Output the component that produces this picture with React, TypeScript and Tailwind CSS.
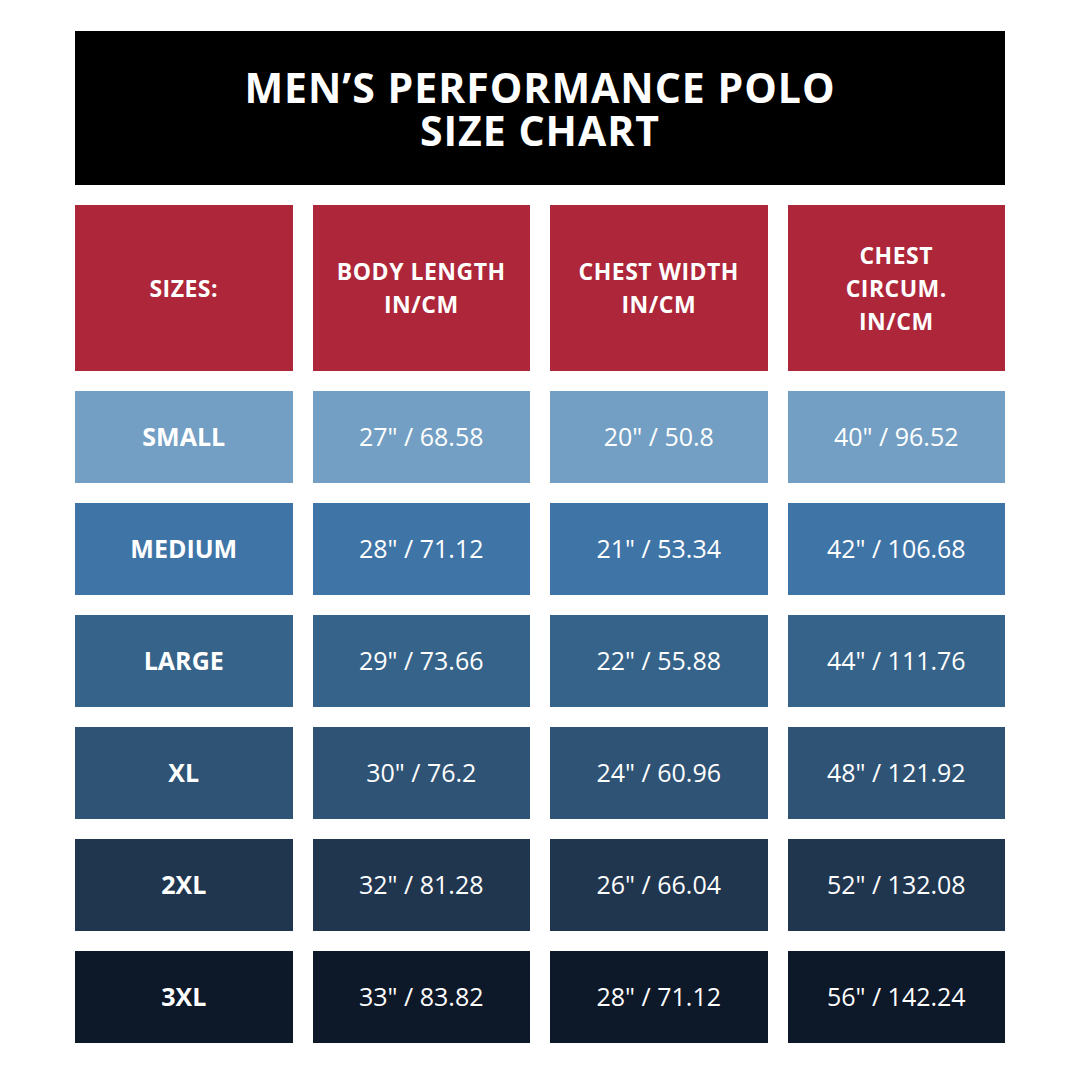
const headers = [
  ["SIZES:"],
  ["BODY LENGTH", "IN/CM"],
  ["CHEST WIDTH", "IN/CM"],
  ["CHEST", "CIRCUM.", "IN/CM"],
]

const rows = [
  { size: "SMALL", body: "27\" / 68.58", width: "20\" / 50.8", circ: "40\" / 96.52", bg: "bg-[#739fc4]" },
  { size: "MEDIUM", body: "28\" / 71.12", width: "21\" / 53.34", circ: "42\" / 106.68", bg: "bg-[#3f74a7]" },
  { size: "LARGE", body: "29\" / 73.66", width: "22\" / 55.88", circ: "44\" / 111.76", bg: "bg-[#356389]" },
  { size: "XL", body: "30\" / 76.2", width: "24\" / 60.96", circ: "48\" / 121.92", bg: "bg-[#2e5374]" },
  { size: "2XL", body: "32\" / 81.28", width: "26\" / 66.04", circ: "52\" / 132.08", bg: "bg-[#20364f]" },
  { size: "3XL", body: "33\" / 83.82", width: "28\" / 71.12", circ: "56\" / 142.24", bg: "bg-[#0d1828]" },
]

export default function App() {
  return (
    <div className="w-[1080px] h-[1080px] bg-white px-[75px] pt-[31px] font-['Open_Sans',sans-serif] text-white">
      {/* Title bar */}
      <div className="h-[154px] bg-black flex flex-col items-center justify-center pt-[2px]">
        <h1 className="text-[41px] font-bold leading-[43px] tracking-[1px] text-center">
          MEN’S PERFORMANCE POLO
          <br />
          SIZE CHART
        </h1>
      </div>

      {/* Column headers */}
      <div className="grid grid-cols-4 gap-5 mt-5">
        {headers.map((lines, i) => (
          <div key={i} className="h-[166px] bg-[#ad2639] flex flex-col items-center justify-center text-[23px] font-bold leading-[33px] tracking-[0.5px] text-center">
            {lines.map((l) => (
              <span key={l}>{l}</span>
            ))}
          </div>
        ))}
      </div>

      {/* Rows */}
      <div className="flex flex-col gap-5 mt-5">
        {rows.map((r) => (
          <div key={r.size} className="grid grid-cols-4 gap-5">
            <div className={`h-[92px] ${r.bg} flex items-center justify-center text-[25px] font-bold`}>{r.size}</div>
            <div className={`h-[92px] ${r.bg} flex items-center justify-center text-[25px]`}>{r.body}</div>
            <div className={`h-[92px] ${r.bg} flex items-center justify-center text-[25px]`}>{r.width}</div>
            <div className={`h-[92px] ${r.bg} flex items-center justify-center text-[25px]`}>{r.circ}</div>
          </div>
        ))}
      </div>
    </div>
  )
}
